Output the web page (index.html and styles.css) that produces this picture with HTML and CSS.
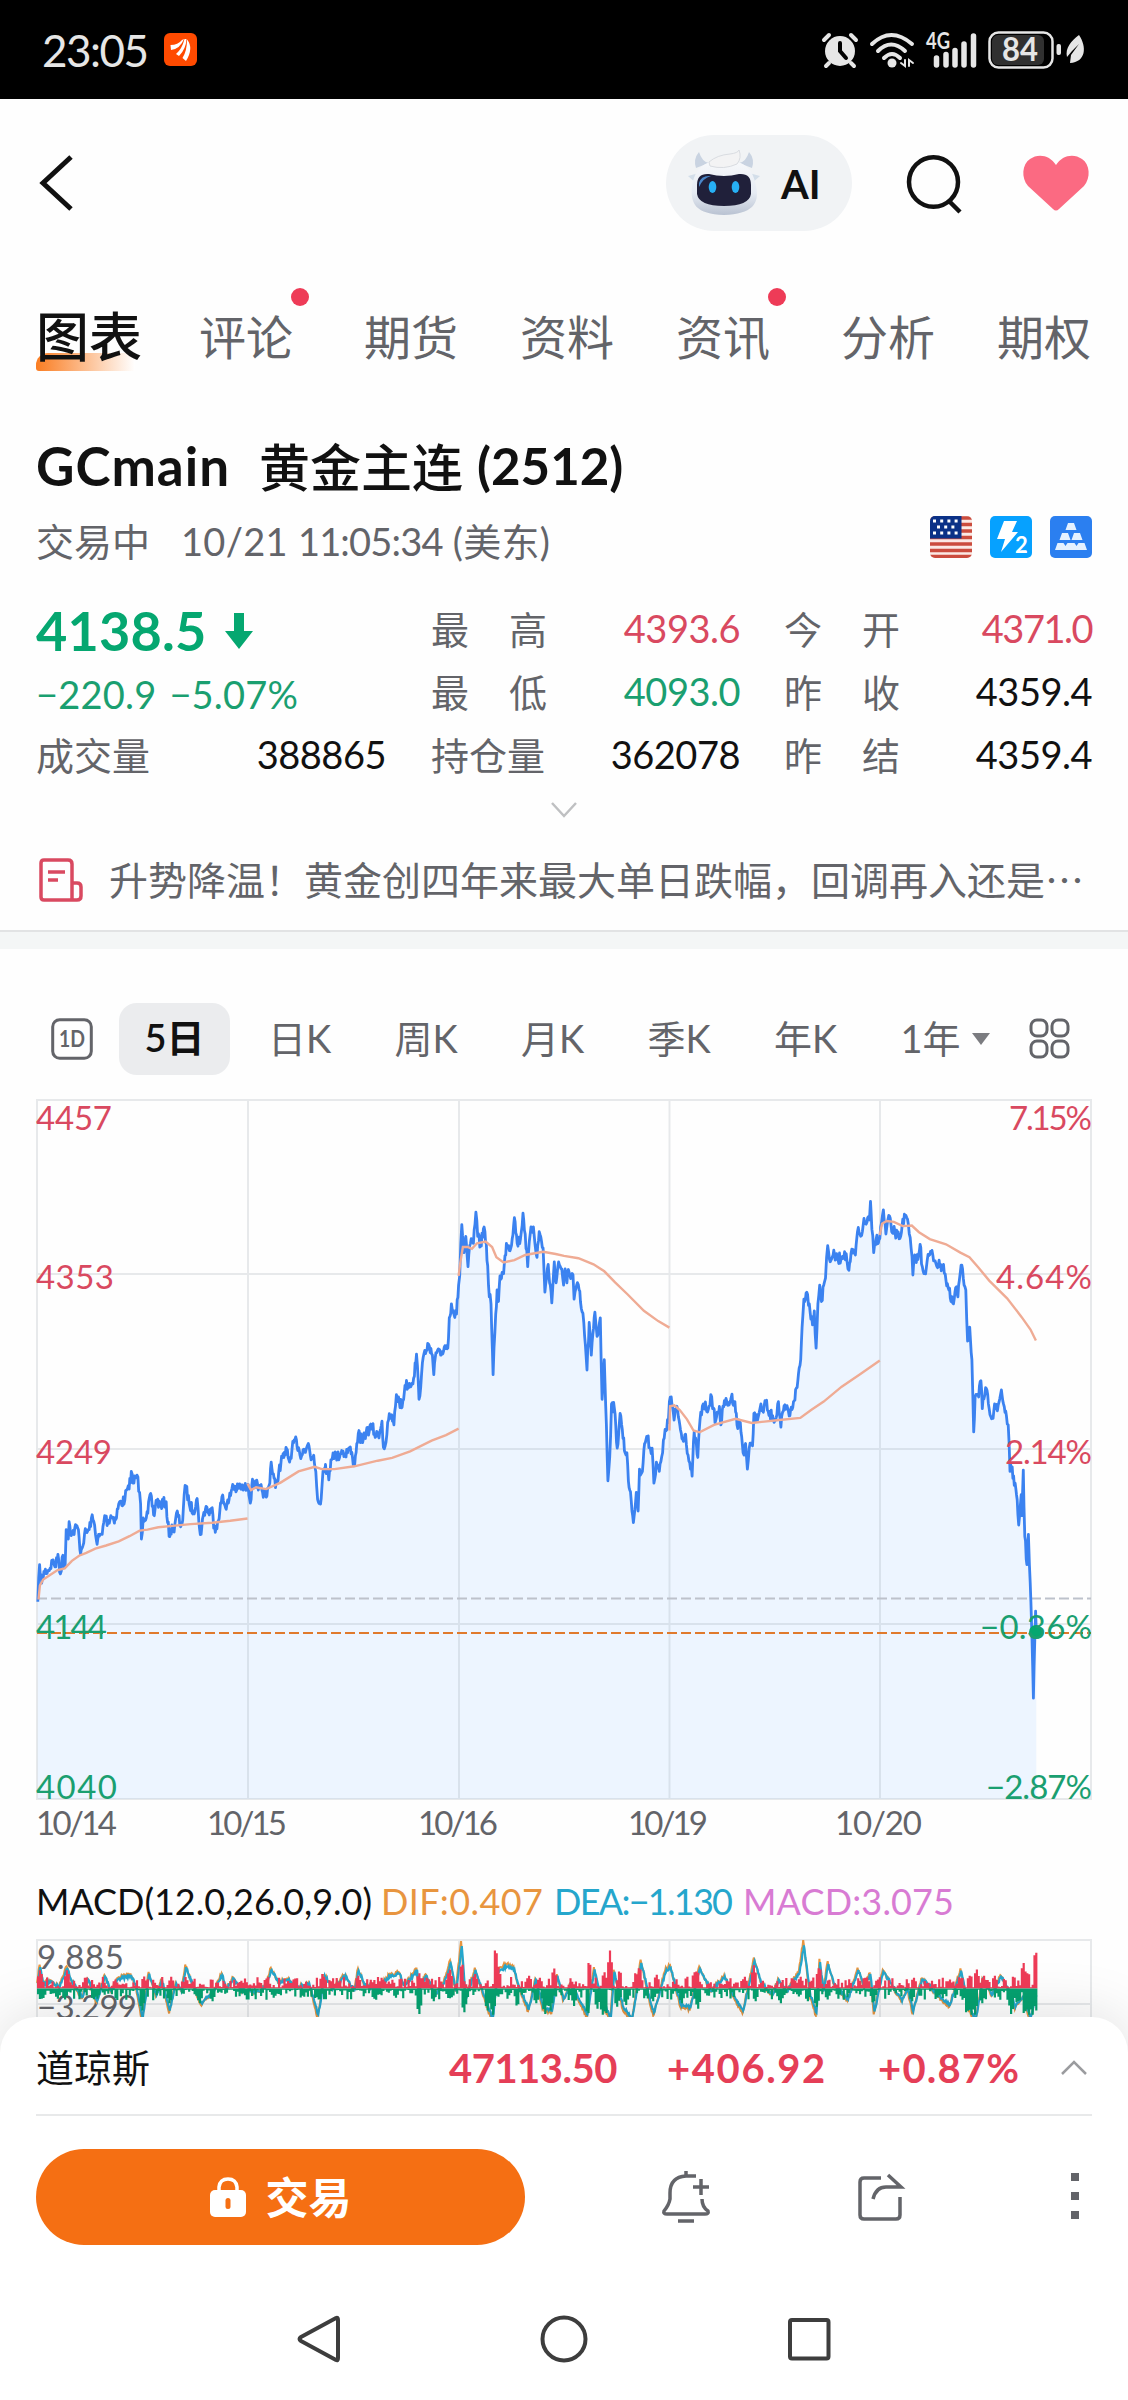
FILE: index.html
```html
<!DOCTYPE html>
<html lang="zh-CN">
<head>
    <meta charset="UTF-8">
    <meta name="viewport" content="width=device-width, initial-scale=1.0">
    <title>GCmain 黄金主连</title>
    <link rel="stylesheet" href="styles.css">
</head>
<body>
    <div class="status-bar">
        <span class="time">23:05</span>
        <svg class="app-icon" width="33" height="33" viewBox="0 0 33 33">
            <rect width="33" height="33" rx="6" fill="#ff4a00"/>
            <g fill="#fff"><path d="M6.500 12Q14 12 18 7L20 6Q16 16 7 17Z"/><path d="M12 21Q18 16 20.500 6L22.500 6Q22 16 15 23Z"/><path d="M18.500 25Q23 18 23 6.500Q30 15 22 28Z"/></g>
        </svg>
        <div class="status-icons">
            <svg width="36" height="36" viewBox="0 0 36 36" fill="none" stroke="#e6e6e6" stroke-linecap="round">
                <circle cx="18" cy="19" r="15" fill="#e6e6e6" stroke="none"/>
                <path d="M2 8L7 3M34 8L29 3M7 31L4 34M29 31L32 34" stroke-width="4"/>
                <path d="M18 11V19L24 26" stroke="#000" stroke-width="4"/>
            </svg>
            <svg width="44" height="36" viewBox="0 0 44 36" fill="none" stroke="#e6e6e6" stroke-width="4" stroke-linecap="round">
                <path d="M2 12Q21 -6 42 12M8 19Q21 6 35 19M14 26Q22 18 30 26"/>
                <circle cx="22" cy="31" r="4.500" fill="#e6e6e6" stroke="none"/>
                <path d="M35 28V34L31 31M39 34V28L43 31" stroke-width="2"/>
            </svg>
            <svg width="50" height="36" viewBox="0 0 50 36">
                <text x="0" y="17" class="net-text" textLength="24" lengthAdjust="spacingAndGlyphs">4G</text>
                <path d="M10.500 26V33M20 22.500V33M29 18.500V33M38 12V33M47.500 4V33" stroke="#e6e6e6" stroke-width="5.500" stroke-linecap="round"/>
            </svg>
            <svg width="98" height="38" viewBox="0 0 98 38">
                <rect x="1.500" y="1.500" width="63" height="35" rx="9" fill="#000" stroke="#e6e6e6" stroke-width="2.500"/>
                <rect x="4" y="4" width="52" height="30" rx="6" fill="#303030"/>
                <text x="14" y="30" class="battery-text" textLength="36" lengthAdjust="spacingAndGlyphs">84</text>
                <rect x="68.500" y="13" width="4.500" height="11" rx="2" fill="#e6e6e6"/>
                <path d="M91 4C83 10 77 17 79 26L84 20L91 13L83 24L82 32C98 31 99 16 91 4Z" fill="#e6e6e6"/>
            </svg>
        </div>
    </div>

    <div class="header">
        <svg class="back" width="36" height="56" viewBox="0 0 36 56" fill="none" stroke="#111" stroke-width="5"><path d="M34 2L6 28L34 54"/></svg>
        <div class="ai-btn">
            <svg width="74" height="66" viewBox="0 0 74 66">
                <defs>
                    <linearGradient id="head" x1="0" y1="0" x2="0" y2="1"><stop offset="0" stop-color="#f8f9fb"/><stop offset=".6" stop-color="#e6ebf3"/><stop offset="1" stop-color="#b9c2d2"/></linearGradient>
                </defs>
                <path d="M9 18Q6 9 12 2Q15 12 22 13ZM65 18Q68 9 62 2Q59 12 52 13Z" fill="#c9d3e1"/>
                <path d="M1 26L12 23L9 33ZM73 26L62 23L65 33Z" fill="#d3dee9"/>
                <path d="M37 10C18 10 8 18 5 36C3 54 9 64 37 65C65 64 73 54 69 36C66 18 56 10 37 10Z" fill="url(#head)"/>
                <path d="M22 12Q30 5 43 4Q51 3 52 0Q55 8 50 14Q37 20 23 16Z" fill="#f3f3f4" stroke="#d9dce1"/>
                <path d="M10 35Q10 23 22 24Q37 28 52 24Q64 23 64 35V44Q62 56 37 56Q12 56 10 44Z" fill="#20203a"/>
                <path d="M12 33Q14 25 24 26Q16 28 12 37Z" fill="#4a86c9"/>
                <ellipse cx="25.500" cy="37" rx="3.800" ry="6" fill="#27b0f5"/><ellipse cx="48.500" cy="37" rx="3.800" ry="6" fill="#27b0f5"/>
            </svg>
            <span>AI</span>
        </div>
        <svg class="search" width="58" height="60" viewBox="0 0 58 60" fill="none" stroke="#111" stroke-width="4.500"><ellipse cx="28.500" cy="29" rx="24.500" ry="24.800"/><path d="M44 48L55 59"/></svg>
        <svg width="66" height="56" viewBox="0 0 66 56"><path d="M30 54L5 31C-2 23 -1 9 7 4C15 -2 27 0 33 10C39 0 51 -2 59 4C67 9 68 23 61 31L36 54Q33 57 30 54Z" fill="#fb6a82"/></svg>
    </div>

    <div class="tabs">
        <div class="tab active">图表</div>
        <div class="tab unread">评论<i class="dot"></i></div>
        <div class="tab">期货</div>
        <div class="tab">资料</div>
        <div class="tab unread">资讯<i class="dot"></i></div>
        <div class="tab">分析</div>
        <div class="tab">期权</div>
    </div>

    <div class="title"><span class="code">GCmain</span><span class="name">黄金主连</span><span class="month">(2512)</span></div>

    <div class="subtitle">
        <span>交易中</span><span class="date">10/21 <b>11:05:34</b> (美东)</span>
        <div class="badges">
            <svg width="42" height="42" viewBox="0 0 42 42">
                <clipPath id="round"><rect width="42" height="42" rx="5"/></clipPath>
                <g clip-path="url(#round)">
                    <rect width="42" height="42" fill="#fbe9e5"/>
                    <path d="M0 2H42M0 8.500H42M0 15H42M0 21.500H42M0 28H42M0 34.500H42M0 40.500H42" stroke="#cb4c3e" stroke-width="3.300"/>
                    <rect width="31.500" height="22.500" fill="#0b3187"/>
                    <path d="M3 5H30M3 17H30" stroke="#fff" stroke-width="3" stroke-dasharray="3 4.200"/>
                    <path d="M7 11H25" stroke="#fff" stroke-width="3" stroke-dasharray="3 4.200"/>
                </g>
            </svg>
            <svg width="42" height="42" viewBox="0 0 42 42"><rect width="42" height="42" rx="5" fill="#06a1ff"/><path d="M14 5H27L22 16H28L11 36L15 23H7Z" fill="#fff"/><text x="25" y="37" class="level-text">2</text></svg>
            <svg width="42" height="42" viewBox="0 0 42 42"><rect width="42" height="42" rx="5" fill="#2b7ff0"/><path d="M18 7H24L26.500 14H15.500ZM12 17H18L20.500 24H9.500ZM24 17H30L32.500 24H21.500ZM7.500 27H13.500L15.500 30L17.500 27H24.500L26.500 30L28.500 27H34.500L37 34H5Z" fill="#e4f1ff"/></svg>
        </div>
    </div>

    <div class="quote">
        <div class="price down">4138.5<svg width="28" height="36" viewBox="0 0 28 36"><path d="M9 0H19V18H28L14 36L0 18H9Z" fill="#05a770"/></svg></div>
        <label>最<i></i>高</label><div class="value up">4393.6</div>
        <label>今<i></i>开</label><div class="value up narrow">4371.0</div>

        <div class="change down"><span>−220.9</span><span>−5.07%</span></div>
        <label>最<i></i>低</label><div class="value down">4093.0</div>
        <label>昨<i></i>收</label><div class="value">4359.4</div>

        <div class="volume"><label>成交量</label><div class="value">388865</div></div>
        <label>持仓量</label><div class="value">362078</div>
        <label>昨<i></i>结</label><div class="value">4359.4</div>
    </div>
    <div class="expand"><svg width="26" height="16" viewBox="0 0 26 16" fill="none" stroke="#bfc0c2" stroke-width="2.500"><path d="M1 1L13 14L25 1"/></svg></div>

    <div class="news">
        <svg width="44" height="44" viewBox="0 0 44 44" fill="none" stroke="#d94960" stroke-width="3.500" stroke-linejoin="round"><path d="M5 2H29Q33 2 33 6V42H5Q2 42 2 39V5Q2 2 5 2ZM33 25H38Q42 25 42 29V38Q42 42 38 42H31M9 14H26M9 22H19"/></svg>
        <span>升势降温！黄金创四年来最大单日跌幅，回调再入还是⋯</span>
    </div>
    <div class="divider"></div>

    <div class="periods">
        <svg class="one-day" width="42" height="42" viewBox="0 0 42 42"><rect x="1.700" y="1.700" width="38.600" height="38.600" rx="7" fill="none" stroke="#636469" stroke-width="3"/><text x="8" y="29" textLength="26" lengthAdjust="spacingAndGlyphs">1D</text></svg>
        <span class="period active">5日</span>
        <span class="period">日K</span>
        <span class="period">周K</span>
        <span class="period">月K</span>
        <span class="period">季K</span>
        <span class="period">年K</span>
        <span class="period year">1年<i class="caret"></i></span>
        <svg class="more" width="42" height="42" viewBox="0 0 42 42" fill="none" stroke="#636469" stroke-width="3"><rect x="2" y="2" width="16" height="16" rx="6"/><rect x="23" y="2" width="16" height="16" rx="6"/><rect x="2" y="23" width="16" height="16" rx="6"/><rect x="23" y="23" width="16" height="16" rx="6"/></svg>
    </div>

    <svg class="chart" width="1128" height="760" viewBox="0 1100 1128 760">
        <path id="area" fill="#edf5ff"/>
        <g class="grid">
            <path d="M37 1101H1091V1800H37ZM37 1275H1091M37 1450H1091M37 1625H1091M248 1101V1800M459 1101V1800M669.500 1101V1800M880 1101V1800"/>
        </g>
        <path d="M37 1599.500H1091" stroke="#bdc2cb" stroke-width="2" stroke-dasharray="10 4"/>
        <path d="M37 1634H1091" stroke="#e07a2c" stroke-width="2.200" stroke-dasharray="10 4"/>
        <path id="price" class="price-line"/>
        <g id="averages" class="average-line"></g>
        <circle cx="1036" cy="1633" r="7" fill="#05a770"/>
        <g class="axis up">
            <text x="36" y="1131" textLength="76">4457</text>
            <text x="36" y="1290" textLength="78">4353</text>
            <text x="36" y="1465" textLength="76">4249</text>
            <text x="1009" y="1131" textLength="83">7.15%</text>
            <text x="996" y="1290" textLength="96">4.64%</text>
            <text x="1005" y="1465" textLength="87">2.14%</text>
        </g>
        <g class="axis down">
            <text x="36" y="1640" textLength="71">4144</text>
            <text x="36" y="1800" textLength="81">4040</text>
            <text x="980" y="1640" textLength="112">−0.36%</text>
            <text x="986" y="1800" textLength="106">−2.87%</text>
        </g>
        <g class="axis">
            <text x="36" y="1836" textLength="81">10/14</text>
            <text x="207" y="1836" textLength="80">10/15</text>
            <text x="418" y="1836" textLength="80">10/16</text>
            <text x="628" y="1836" textLength="80">10/19</text>
            <text x="835" y="1836" textLength="87">10/20</text>
        </g>
    </svg>

    <svg class="macd" width="1128" height="160" viewBox="0 1860 1128 160">
        <g class="macd-text">
            <text x="36" y="1916" fill="#111" textLength="336">MACD(12.0,26.0,9.0)</text>
            <text x="381" y="1916" fill="#e8953f" textLength="162">DIF:0.407</text>
            <text x="554" y="1916" fill="#25a6cc" textLength="179">DEA:−1.130</text>
            <text x="743" y="1916" fill="#d87bd3" textLength="211">MACD:3.075</text>
        </g>
        <path class="grid" d="M37 2020V1941H1091V2020M248 1941V2020M459 1941V2020M669.500 1941V2020M880 1941V2020M37 2005H1091"/>
        <g class="axis">
            <text x="37" y="1970" textLength="87">9.885</text>
            <text x="37" y="2020" textLength="100">−3.299</text>
        </g>
        <path id="dif" fill="none" stroke="#e8953f" stroke-width="2"/>
        <path id="dea" fill="none" stroke="#25a6cc" stroke-width="2.200"/>
        <path id="redBars" fill="none" stroke="#ee3b57" stroke-width="2.200"/>
        <path id="greenBars" fill="none" stroke="#05a270" stroke-width="2.200"/>
    </svg>

    <div class="sheet">
        <div class="index">
            <span class="index-name">道琼斯</span>
            <span class="index-price">47113.50</span>
            <span class="index-change">+406.92</span>
            <span class="index-rate">+0.87%</span>
            <svg width="26" height="16" viewBox="0 0 26 16" fill="none" stroke="#9b9c9f" stroke-width="2.500"><path d="M1 14L13 2L25 14"/></svg>
        </div>
        <div class="actions">
            <button class="trade">
                <svg width="36" height="40" viewBox="0 0 36 40"><path d="M9 15V10Q10 2 18 2Q26 2 27 10V15" fill="none" stroke="#fff" stroke-width="3.500"/><rect y="13" width="36" height="27" rx="5" fill="#fff"/><rect x="15.500" y="21" width="5" height="11" rx="2.500" fill="#f56f13"/></svg>
                <span>交易</span>
            </button>
            <svg class="bell" width="48" height="54" viewBox="0 0 48 54" fill="none" stroke="#636469" stroke-width="3.500"><path d="M34 6H24Q8 7 8 23V29Q7 35 2 41Q1 44 5 44H43Q47 44 46 41Q40 37 40 29M24 1V6M16 51H32M39 9V25M31 17H47"/></svg>
            <svg class="share" width="48" height="50" viewBox="0 0 48 50" fill="none" stroke="#636469" stroke-width="3.500"><path d="M24 6H7Q3 6 3 10V43Q3 47 7 47H39Q43 47 43 43V25M16 27Q19 15 29 15H44L31 3"/></svg>
            <svg width="8" height="48" viewBox="0 0 8 48" fill="#636469"><path d="M0 0H8V8H0ZM0 19H8V27H0ZM0 38H8V46H0Z"/></svg>
        </div>
        <div class="nav-bar">
            <svg width="44" height="50" viewBox="0 0 44 50" fill="none" stroke="#3d3d3d" stroke-width="4" stroke-linejoin="round"><path d="M39 4Q41 3 41 6V44Q41 47 39 46L4 27Q1 25 4 23Z"/></svg>
            <svg width="48" height="50" viewBox="0 0 48 50" fill="none" stroke="#3d3d3d" stroke-width="4"><circle cx="24" cy="25" r="21.500"/></svg>
            <svg width="44" height="50" viewBox="0 0 44 50" fill="none" stroke="#3d3d3d" stroke-width="4"><rect x="3" y="6" width="38.500" height="38.500" rx="2"/></svg>
        </div>
    </div>
    <script src="chart.js"></script>
</body>
</html>
```
FILE: styles.css
```css
* {
    box-sizing: border-box;
}

body {
    margin: 0;
    width: 1128px;
    height: 2400px;
    position: relative;
    overflow: hidden;
    background: #fefefe;
    color: #636469;
    font-family: Lato, "Noto Sans CJK SC", sans-serif;
}

svg {
    display: block;
    flex: none;
    overflow: visible;
}

svg text {
    font-family: Lato, "Noto Sans CJK SC", sans-serif;
}

/* Status bar */
.status-bar {
    display: flex;
    align-items: center;
    height: 99px;
    padding: 0 42px;
    background: #000;
    color: #e6e6e6;
}

.time {
    width: 122px;
    font-size: 44px;
    letter-spacing: -1.5px;
}

.status-icons {
    display: flex;
    align-items: center;
    gap: 12px;
    margin-left: auto;
}

.net-text {
    font-size: 22px;
    font-weight: bold;
    fill: #e6e6e6;
}

.battery-text {
    font-size: 33px;
    font-weight: bold;
    fill: #e6e6e6;
}

/* Header */
.header {
    display: flex;
    align-items: center;
    height: 168px;
    padding: 0 39px 0 37px;
}

.ai-btn {
    display: flex;
    align-items: center;
    width: 186px;
    height: 96px;
    margin-left: auto;
    padding-left: 21px;
    border-radius: 48px;
    background: #f1f3f5;
    color: #111;
    font-size: 40px;
    font-weight: bold;
}

.ai-btn span {
    margin-left: 20px;
    padding-top: 2px;
}

.search {
    margin: 0 60px 0 53px;
}

/* Tabs */
.tabs {
    display: flex;
    align-items: center;
    gap: 62px;
    height: 140px;
    padding-left: 36px;
    font-size: 47px;
}

.tab {
    position: relative;
    flex: none;
    line-height: 68px;
}

.tab.unread {
    padding-right: 9px;
}

.tab.active {
    width: 106px;
    margin-right: -5px;
    color: #111;
    font-size: 53px;
    font-weight: 500;
    z-index: 0;
}

.tab.active::after {
    content: "";
    position: absolute;
    z-index: -1;
    left: 0;
    bottom: 0;
    width: 99px;
    height: 18px;
    border-radius: 12px 0 0 3px;
    background: linear-gradient(to right, #fa7d22, #fff);
}

.dot {
    position: absolute;
    top: -15px;
    right: -7px;
    width: 18px;
    height: 18px;
    border-radius: 50%;
    background: #ee3b57;
}

/* Name and time */
.title {
    display: flex;
    height: 116px;
    padding-left: 36px;
    align-items: center;
    color: #111;
    font-size: 51px;
    font-weight: bold;
}

.code {
    width: 223px;
    font-size: 53px;
    letter-spacing: 1px;
}

.name {
    width: 218px;
    font-weight: 500;
}

.subtitle {
    display: flex;
    align-items: center;
    height: 54px;
    margin-top: -11px;
    padding: 0 36px;
    font-size: 38px;
}

.subtitle .date {
    margin-left: 31px;
    letter-spacing: 0.3px;
}

.subtitle b {
    font-weight: normal;
    letter-spacing: -0.8px;
}

.badges {
    display: flex;
    gap: 18px;
    margin-left: auto;
    margin-bottom: 5px;
}

.level-text {
    font-size: 22px;
    font-weight: bold;
    fill: #fff;
}

/* Quote table */
.quote {
    display: grid;
    grid-template-columns: 395px 116px 193px 160px 192px;
    grid-auto-rows: 63px;
    margin-top: 33px;
    padding: 0 36px;
    align-items: center;
    font-size: 38px;
}

label {
    display: flex;
    justify-content: space-between;
    justify-self: end;
    width: 116px;
    padding-bottom: 6px;
    font-size: 38px;
}

.value {
    color: #111;
    text-align: right;
    line-height: 58px;
    padding-bottom: 5px;
    letter-spacing: -0.5px;
}

.value.narrow {
    letter-spacing: -1.5px;
}

.up, .value.up {
    color: #d94960;
    fill: #d94960;
}

.down, .value.down {
    color: #1a9f70;
    fill: #1a9f70;
}

.price {
    display: flex;
    align-items: center;
    gap: 18px;
    color: #05a770;
    font-size: 54px;
    font-weight: bold;
    letter-spacing: 0.2px;
}

.price.down {
    color: #05a770;
}

.change {
    display: flex;
    gap: 13px;
    letter-spacing: 0.2px;
}

.volume {
    display: flex;
    align-items: center;
    justify-content: space-between;
    width: 350px;
}

.expand {
    display: flex;
    justify-content: center;
    padding-top: 14px;
    height: 45px;
}

/* News */
.news {
    display: flex;
    align-items: center;
    gap: 26px;
    height: 89px;
    margin-bottom: 8px;
    padding: 5px 39px 0;
    font-size: 39px;
    white-space: nowrap;
}

.news span {
    padding-bottom: 4px;
}

.divider {
    height: 19px;
    border-top: 2px solid #e2e3e4;
    background: #f4f6f6;
}

/* Periods */
.periods {
    display: flex;
    align-items: center;
    height: 150px;
    padding: 30px 57px 0 51px;
    font-size: 38px;
}

.one-day text {
    font-size: 23px;
    font-weight: bold;
    fill: #636469;
}

.period {
    width: 126.5px;
    padding-bottom: 5px;
}

.period.active {
    width: 111px;
    margin: 0 38px 0 26px;
    padding: 0 0 4px;
    border-radius: 18px;
    background: #ebecee;
    color: #111;
    font-weight: 600;
    line-height: 68px;
    text-align: center;
}

.period.year {
    display: flex;
    align-items: center;
    width: auto;
    gap: 11px;
}

.caret {
    margin-top: 5px;
    border: 9px solid transparent;
    border-top: 12px solid #7b7c80;
    border-bottom: 0;
}

.more {
    margin-left: auto;
}

/* Charts */
.grid {
    fill: none;
    stroke: #8a94a0;
    stroke-opacity: 0.2;
    stroke-width: 2;
}

.price-line {
    fill: none;
    stroke: #3b82f0;
    stroke-width: 2.8;
    stroke-linejoin: round;
}

.average-line {
    fill: none;
    stroke: #efab94;
    stroke-width: 2.4;
}

.axis {
    font-size: 33px;
    fill: #636469;
}

.axis.up {
    fill: #d94960;
}

.axis.down {
    fill: #1a9f70;
}

.macd-text {
    font-size: 36px;
}

/* Bottom sheet */
.sheet {
    position: absolute;
    left: 0;
    bottom: 0;
    width: 1128px;
    height: 383px;
    border-radius: 36px 36px 0 0;
    background: #fff;
    box-shadow: 0 0 60px rgba(0, 0, 0, 0.13);
}

.index {
    display: flex;
    align-items: center;
    height: 99px;
    margin: 0 36px;
    padding: 5px 5px 0 0;
    border-bottom: 2px solid #e8e9ea;
    font-size: 40px;
    font-weight: bold;
    color: #e53e57;
}

.index-name {
    width: 413px;
    padding-bottom: 5px;
    color: #111;
    font-size: 38px;
    font-weight: normal;
}

.index-price {
    width: 218px;
    letter-spacing: -0.5px;
}

.index-change {
    width: 211px;
    letter-spacing: 1.6px;
}

.index-rate {
    letter-spacing: 1.2px;
}

.index svg {
    margin-left: auto;
}

.actions {
    display: flex;
    align-items: center;
    height: 162px;
    padding: 0 49px 0 36px;
}

.trade {
    display: flex;
    align-items: center;
    justify-content: center;
    gap: 20px;
    width: 489px;
    height: 96px;
    border: none;
    border-radius: 48px;
    background: #f56f13;
    color: #fff;
    font-family: Lato, "Noto Sans CJK SC", sans-serif;
    font-size: 43px;
    font-weight: bold;
}

.trade span {
    padding-bottom: 4px;
}

.bell {
    margin-left: 137px;
}

.share {
    margin-left: 147px;
    margin-right: auto;
}

.nav-bar {
    display: flex;
    align-items: center;
    justify-content: center;
    gap: 199px;
    height: 122px;
}
```
FILE: chart.js
```js
// grid units of the recorded series -> chart pixels
const UNIT_X = 564 / 1568;
const UNIT_Y = 730 / 1568;
const MACD_Y = 610 / 1568;

const prices = `105,1080 110,1000 116,1040 122,1015 135,1012 148,990 155,1005 161,978 168,1020 175,980 181,1005 184,925 190,945 192,908 200,935 212,920 218,925 222,968 228,965 235,935 248,925 254,900 263,915 268,948 284,935 291,895 300,910 308,895 322,903 330,870 347,862 352,840 359,838 365,800 370,825 381,808 388,845 391,870 393,945 398,900 411,890 417,850 429,895 434,862 445,872 462,865 466,910 472,940 478,915 484,930 493,885 500,915 508,905 512,850 517,832 526,870 538,885 548,858 553,910 559,935 565,895 573,875 580,890 590,878 594,922 601,918 611,885 617,855 625,872 635,868 647,828 658,840 668,832 680,838 690,828 696,868 700,830 710,820 718,840 728,840 740,855 748,830 754,780 766,835 775,800 785,770 793,765 797,752 805,780 812,750 820,732 828,755 834,765 845,752 857,740 865,775 872,765 878,800 883,860 893,858 898,800 905,785 914,818 920,775 926,760 938,770 950,755 960,762 972,750 980,770 986,785 992,740 996,718 1008,738 1018,715 1035,705 1045,725 1056,715 1062,692 1066,748 1071,745 1080,690 1087,680 1095,700 1102,635 1110,650 1118,662 1126,615 1140,612 1150,600 1158,548 1165,645 1172,590 1181,540 1189,525 1196,545 1202,550 1206,592 1212,545 1225,550 1237,530 1245,535 1249,470 1255,440 1262,462 1269,462 1275,400 1278,380 1281,310 1284,270 1290,330 1295,295 1301,360 1308,310 1316,310 1323,243 1328,295 1336,315 1346,275 1352,310 1358,400 1365,440 1371,592 1376,500 1382,410 1386,435 1390,380 1400,375 1408,310 1420,320 1430,255 1438,310 1447,300 1454,245 1460,290 1467,360 1474,290 1483,275 1493,340 1499,285 1510,320 1515,415 1524,355 1534,438 1541,350 1546,395 1553,350 1562,365 1567,400
1571,365 1576,395 1578,375 1593,378 1596,430 1603,400 1610,410 1616,450 1623,480 1632,582 1638,480 1644,550 1654,458 1660,510 1669,470 1674,645 1680,560 1686,700 1690,820 1695,770 1700,655 1708,665 1716,750 1724,675 1730,710 1738,760 1743,760 1749,835 1755,865 1761,910 1769,845 1774,885 1778,795 1786,800 1792,740 1798,725 1808,750 1813,750 1818,825 1825,780 1833,800 1842,760 1849,710 1858,695 1861,650 1866,640 1874,690 1882,660 1890,700 1896,730 1906,720 1913,765 1924,810 1930,715 1940,770 1946,690 1955,655 1963,665 1971,660 1976,635 1981,665 1990,690 2000,660 2004,700 2014,648 2023,658 2033,640 2043,650 2049,700 2058,695 2066,760 2073,740 2078,795 2083,750 2092,745 2096,675 2106,690 2113,665 2120,670 2129,650 2138,680 2148,680 2156,690 2164,650 2171,705 2178,670 2186,665 2196,680 2206,650 2216,620 2220,590 2226,560 2230,490 2235,430 2243,415 2250,440 2259,485 2264,455 2269,535 2274,440 2279,400 2284,435 2290,400 2295,385 2298,340 2301,315 2306,345 2316,335 2328,345 2340,340 2348,328 2355,350 2360,368 2366,332 2378,335 2384,285 2393,295 2400,268 2410,265 2417,260 2420,220 2424,280 2429,330 2436,300 2446,300 2451,265 2456,238 2463,290 2471,250 2479,285 2488,285 2495,295 2504,295 2510,258 2523,258 2528,290 2533,320 2538,378 2543,335 2552,345 2558,312 2564,360 2571,375 2578,345 2589,330 2600,348 2613,360 2623,355 2630,390 2638,410 2644,435 2651,440 2657,405 2663,425 2667,390 2672,357 2678,385 2685,410 2690,520 2696,490 2702,560 2707,715 2711,640 2716,635 2721,640 2727,605 2731,665 2740,620 2748,655 2759,685 2765,655 2773,670 2784,625 2790,655 2798,680 2803,700 2808,800 2814,790 2820,830 2826,850 2832,915 2839,850 2841,895 2845,797 2849,940 2855,1000 2859,935 2862,1000 2866,1080 2869,1160 2873,1287 2877,1160 2879,1100 2881,1145`;

const averages = [
    "107,1075 111,1045 120,1032 140,1022 160,1012 180,1008 200,992 220,981 240,975 265,966 295,959 330,950 360,939 388,927 410,925 440,920 480,917 530,913 590,910 640,906 688,901",
    "688,826 698,840 712,834 740,838 780,824 830,800 875,790 895,795 930,795 985,789 1050,777 1090,771 1140,757 1200,734 1240,722 1275,708",
    "1275,380 1280,350 1287,318 1300,318 1312,322 1326,310 1350,306 1368,318 1380,340 1400,351 1430,346 1460,335 1510,328 1545,333 1568,337 1608,342 1650,355 1680,370 1710,394 1745,420 1790,455 1830,477 1861,491",
    "1861,712 1863,660 1875,658 1890,668 1910,688 1928,712 1945,716 1985,700 2045,687 2090,696 2160,690 2225,685 2255,668 2290,650 2340,618 2390,592 2446,562",
    "2446,292 2452,268 2465,262 2485,264 2510,273 2535,272 2555,286 2585,301 2630,312 2670,330 2695,340 2720,362 2750,390 2800,428 2840,468 2865,495 2880,519"
];

const dea = "105,500 112,458 120,500 145,495 165,510 187,462 200,495 230,535 245,490 270,545 292,482 310,520 330,488 365,480 380,510 397,590 415,475 435,530 450,490 472,570 490,500 505,520 517,458 535,500 560,550 595,520 618,478 630,515 650,487 670,515 720,520 740,505 755,465 775,500 800,490 830,510 860,500 885,580 903,480 925,515 960,480 985,520 997,467 1015,505 1050,515 1085,480 1110,475 1125,505 1160,467 1165,520 1185,480 1210,530 1235,500 1253,448 1268,520 1284,404 1295,540 1322,465 1345,530 1370,590 1385,470 1410,457 1430,463 1440,500 1470,565 1490,490 1510,560 1535,570 1550,480 1567,540 1588,500 1633,580 1653,464 1673,540 1698,590 1708,470 1733,560 1758,590 1783,447 1808,545 1818,575 1853,464 1865,460 1893,555 1920,560 1946,462 1978,520 2015,482 2038,530 2066,570 2098,442 2118,500 2148,530 2165,490 2188,520 2223,472 2235,402 2253,530 2270,575 2280,445 2290,520 2303,450 2318,500 2358,540 2386,465 2403,510 2420,478 2431,572 2456,470 2478,500 2508,545 2523,510 2539,572 2563,490 2578,500 2608,530 2641,555 2672,467 2693,560 2713,590 2733,490 2758,530 2783,482 2808,520 2823,560 2848,530 2865,590 2881,530";

// histogram peaks: position, height above / below the zero line
const redPeaks = "112,50 187,50 235,22 320,25 400,33 476,30 517,28 897,40 995,35 1062,30 1165,42 1175,28 1250,52 1284,70 1320,40 1378,112 1385,60 1470,35 1500,30 1540,55 1638,75 1680,45 1696,98 1723,50 1768,45 1778,60 1825,38 1930,45 1938,50 2070,32 2096,60 2225,32 2275,50 2278,60 2440,25 2540,30 2640,25 2698,38 2715,52 2735,35 2765,35 2818,35 2845,70 2858,45 2879,105";
const greenPeaks = "118,30 160,28 180,30 270,28 395,60 472,40 555,40 590,35 762,25 885,30 1100,25 1165,70 1205,35 1290,65 1355,60 1370,72 1438,50 1490,40 1515,70 1530,60 1596,45 1634,72 1660,55 1675,72 1684,72 1715,50 1740,45 1815,35 1895,40 1940,55 2100,35 2170,40 2245,35 2270,50 2300,30 2428,40 2535,35 2688,70 2700,72 2710,72 2730,40 2812,70 2828,40 2848,72 2860,72 2870,72 2880,60";

let seed = 7;
function random() {
    seed = (seed * 16807) % 2147483647;
    return seed / 2147483647;
}

function parse(text) {
    return text.trim().split(/\s+/).map(pair => pair.split(",").map(Number));
}

function toPath(points) {
    return "M" + points.map(p => p[0].toFixed(1) + " " + p[1].toFixed(1)).join("L");
}

function priceScale(p) {
    return [p[0] * UNIT_X, 1100 + p[1] * UNIT_Y];
}

function macdScale(p) {
    return [p[0] * UNIT_X, 1790 + p[1] * MACD_Y];
}

function addTicks(points, size) {
    const result = [];
    points.forEach((p, i) => {
        result.push(p);
        const next = points[i + 1];
        if (!next) return;
        const steps = Math.floor((next[0] - p[0]) / 1.9);
        for (let s = 1; s < steps; s++) {
            const t = s / steps;
            result.push([p[0] + (next[0] - p[0]) * t, p[1] + (next[1] - p[1]) * t + (random() - 0.5) * size]);
        }
    });
    return result;
}

const line = toPath(addTicks(parse(prices), 24).map(priceScale));
document.getElementById("price").setAttribute("d", line);
document.getElementById("area").setAttribute("d", line + "V1800H37.500Z");

averages.forEach(text => {
    const path = document.createElementNS("http://www.w3.org/2000/svg", "path");
    path.setAttribute("d", toPath(parse(text).map(priceScale)));
    document.getElementById("averages").appendChild(path);
});

const deaPoints = addTicks(parse(dea), 8);
document.getElementById("dea").setAttribute("d", toPath(deaPoints.map(macdScale)));
document.getElementById("dif").setAttribute("d", toPath(deaPoints.map(p => [p[0] - 2, p[1] + (p[1] - 513) * 0.12]).map(macdScale)));

function bars(peaks, sign) {
    let d = "";
    for (let x = 106; x < 2884; x += 5) {
        let h = 3 + Math.pow(random(), 2.2) * 27;
        peaks.forEach(p => {
            const gap = Math.abs(p[0] - x);
            if (gap < 7) h = Math.max(h, p[1] * (1 - gap / 16));
        });
        d += "M" + (x * UNIT_X).toFixed(1) + " " + (1790 + 513 * MACD_Y) + "v" + (h * sign * MACD_Y).toFixed(1);
    }
    return d;
}

document.getElementById("redBars").setAttribute("d", bars(parse(redPeaks), -1));
document.getElementById("greenBars").setAttribute("d", bars(parse(greenPeaks), 1));
```
